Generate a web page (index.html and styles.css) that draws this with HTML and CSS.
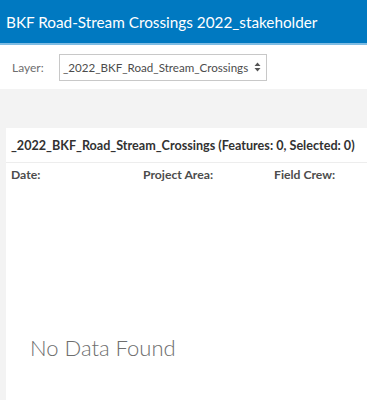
FILE: index.html
```html
<!DOCTYPE html>
<html>
<head>
<meta charset="utf-8">
<link rel="stylesheet" href="styles.css">
</head>
<body>
<header class="app-header">
  <h1 class="app-title">BKF Road-Stream Crossings 2022_stakeholder</h1>
</header>
<div class="toolbar">
  <label class="layer-label" for="layer">Layer:</label>
  <div class="select-box">
    <span class="select-text">_2022_BKF_Road_Stream_Crossings</span>
    <svg class="select-arrows" width="7" height="10" viewBox="0 0 7 10"><path d="M0.5 4 L3.5 0.5 L6.5 4 Z M0.5 6 L3.5 9.5 L6.5 6 Z" fill="#555"/></svg>
  </div>
</div>
<div class="content">
  <section class="panel">
    <div class="panel-title">_2022_BKF_Road_Stream_Crossings (Features: 0, Selected: 0)</div>
    <div class="columns">
      <span class="col col-date">Date:</span>
      <span class="col col-area">Project Area:</span>
      <span class="col col-crew">Field Crew:</span>
    </div>
    <div class="empty">No Data Found</div>
  </section>
</div>
</body>
</html>
```
FILE: styles.css
```css
html, body {
  margin: 0;
  padding: 0;
  height: 100%;
  overflow: hidden;
}
body {
  font-family: Lato, "Open Sans", sans-serif;
  background: #f3f3f3;
  display: flex;
  flex-direction: column;
}
.app-header {
  background: #0079c1;
  height: 43px;
  border-bottom: 2px solid #7fbce3;
  display: flex;
  align-items: center;
  padding-left: 6px;
  flex: none;
}
.app-title {
  margin: 0;
  color: #fff;
  font-size: 15.3px;
  font-weight: 400;
}
.toolbar {
  background: #fff;
  height: 44px;
  display: flex;
  align-items: center;
  padding-left: 12px;
  flex: none;
}
.layer-label {
  color: #6e6e6e;
  font-size: 12px;
  width: 47px;
}
.select-box {
  width: 198px;
  height: 25px;
  border: 1px solid #c8c8c8;
  display: flex;
  align-items: center;
  justify-content: space-between;
  padding: 0 5px 0 3px;
}
.select-text {
  color: #4c4c4c;
  font-size: 11.6px;
  white-space: nowrap;
}
.content {
  flex: 1;
  padding: 39px 0 0 6px;
  display: flex;
}
.panel {
  flex: 1;
  background: #fff;
  display: flex;
  flex-direction: column;
}
.panel-title {
  height: 34px;
  border-bottom: 1px solid #ededed;
  display: flex;
  align-items: center;
  padding-left: 5px;
  font-size: 12.6px;
  font-weight: 700;
  color: #323232;
  white-space: nowrap;
}
.columns {
  display: grid;
  grid-template-columns: 132px 131px auto;
  padding: 4px 0 0 5px;
  font-size: 12.2px;
  font-weight: 700;
  color: #4c4c4c;
}
.empty {
  margin-top: 152px;
  padding-left: 24px;
  font-size: 22px;
  font-weight: 300;
  color: #6e6e6e;
}
```
